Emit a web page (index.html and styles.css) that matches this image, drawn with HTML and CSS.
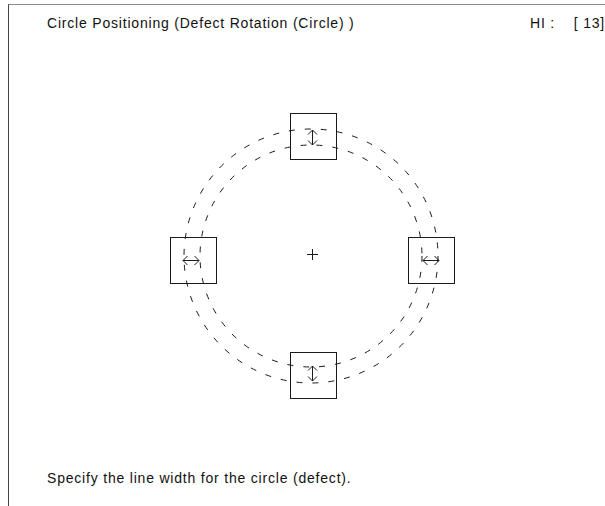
FILE: index.html
```html
<!DOCTYPE html>
<html>
<head>
<meta charset="utf-8">
<link rel="stylesheet" href="styles.css">
</head>
<body>
<div class="frame">
  <div class="header">
    <span class="title">Circle Positioning (Defect Rotation (Circle) )</span>
    <span class="hi">HI :&nbsp;&nbsp;&nbsp; [ 13]</span>
  </div>
  <svg class="canvas" width="596" height="435" viewBox="9 35 596 435" xmlns="http://www.w3.org/2000/svg">
    <g fill="none" stroke="#1a1a1a" stroke-width="1">
      <circle class="dash" cx="311" cy="256" r="127"/>
      <circle class="dash" cx="311" cy="256" r="111"/>
      <rect x="290.5" y="113.5" width="46" height="46"/>
      <rect x="170.5" y="237.5" width="46" height="46"/>
      <rect x="408.5" y="237.5" width="46" height="46"/>
      <rect x="290.5" y="352.5" width="46" height="46"/>
      <path d="M312.5 249 V260 M307 254.5 H318"/>
      <path d="M312.5 130 V145 M308 134.5 L312.5 130 L317 134.5 M308 140.5 L312.5 145 L317 140.5"/>
      <path d="M312.5 366 V381 M308 370.5 L312.5 366 L317 370.5 M308 376.5 L312.5 381 L317 376.5"/>
      <path d="M183 260.5 H199 M187.5 256 L183 260.5 L187.5 265 M194.5 256 L199 260.5 L194.5 265"/>
      <path d="M423 260.5 H439 M427.5 256 L423 260.5 L427.5 265 M434.5 256 L439 260.5 L434.5 265"/>
    </g>
  </svg>
  <div class="footer">Specify the line width for the circle (defect).</div>
</div>
</body>
</html>
```
FILE: styles.css
```css
html, body {
  margin: 0;
  padding: 0;
  background: #ffffff;
}
body {
  font-family: "Liberation Sans", Arial, sans-serif;
  font-size: 14px;
  letter-spacing: 0.8px;
  color: #111;
  width: 605px;
  height: 506px;
  overflow: hidden;
}
.frame {
  margin: 4px 0 0 8px;
  height: 502px;
  border-top: 1px solid #8a8a8a;
  border-left: 1px solid #444;
  display: flex;
  flex-direction: column;
  box-sizing: border-box;
}
.header {
  height: 30px;
  box-sizing: border-box;
  padding: 10px 0 0 38px;
  display: flex;
  justify-content: space-between;
  line-height: 16px;
  white-space: pre;
}
.canvas {
  display: block;
  flex: none;
}
.dash {
  stroke-dasharray: 6 10;
}
.footer {
  padding-left: 38px;
  line-height: 16px;
}
```
